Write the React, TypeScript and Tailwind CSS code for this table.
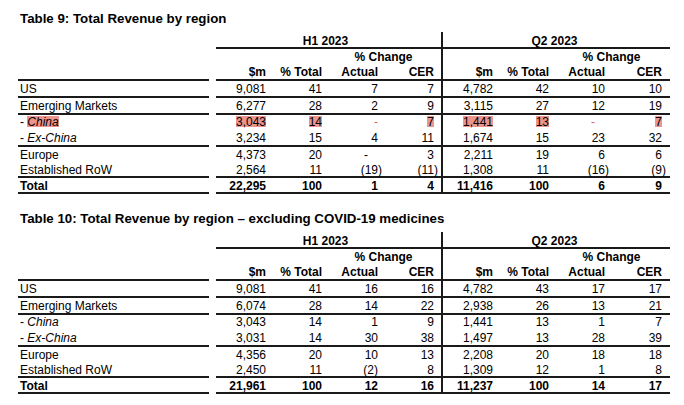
import clsx from "clsx";

type Row = {
  label: string;
  sub?: boolean;
  hlLabel?: boolean;
  vals: string[];
  cls: string;
  line?: boolean;
  bold?: boolean;
};

// flags inside a value: ! highlight, ~ shifted dash, ^ hanging parenthesis
const table9: Row[] = [
  { label: "US", vals: ["9,081", "41", "7", "7", "4,782", "42", "10", "10"], cls: "h-[17px] leading-[16px]", line: true },
  { label: "Emerging Markets", vals: ["6,277", "28", "2", "9", "3,115", "27", "12", "19"], cls: "h-[17px] leading-[16px]", line: true },
  { label: "China", sub: true, hlLabel: true, vals: ["!3,043", "!14", "!-", "!7", "!1,441", "!13", "!~-", "!7"], cls: "h-[16px] leading-[15px]" },
  { label: "Ex-China", sub: true, vals: ["3,234", "15", "4", "11", "1,674", "15", "23", "32"], cls: "h-[16px] leading-[15px]", line: true },
  { label: "Europe", vals: ["4,373", "20", "~-", "3", "2,211", "19", "6", "6"], cls: "h-[15px] leading-[16px]" },
  { label: "Established RoW", vals: ["2,564", "11", "^(19)", "^(11)", "1,308", "11", "^(16)", "^(9)"], cls: "h-[16px] leading-[17px]", line: true },
  { label: "Total", bold: true, vals: ["22,295", "100", "1", "4", "11,416", "100", "6", "9"], cls: "h-[16px] leading-[17px]", line: true },
];

const table10: Row[] = [
  { label: "US", vals: ["9,081", "41", "16", "16", "4,782", "43", "17", "17"], cls: "h-[17px] leading-[16px]", line: true },
  { label: "Emerging Markets", vals: ["6,074", "28", "14", "22", "2,938", "26", "13", "21"], cls: "h-[17px] leading-[16px]", line: true },
  { label: "China", sub: true, vals: ["3,043", "14", "1", "9", "1,441", "13", "1", "7"], cls: "h-[16px] leading-[15px]" },
  { label: "Ex-China", sub: true, vals: ["3,031", "14", "30", "38", "1,497", "13", "28", "39"], cls: "h-[16px] leading-[15px]", line: true },
  { label: "Europe", vals: ["4,356", "20", "10", "13", "2,208", "20", "18", "18"], cls: "h-[15px] leading-[16px]" },
  { label: "Established RoW", vals: ["2,450", "11", "(2)", "8", "1,309", "12", "1", "8"], cls: "h-[16px] leading-[17px]", line: true },
  { label: "Total", bold: true, vals: ["21,961", "100", "12", "16", "11,237", "100", "14", "17"], cls: "h-[16px] leading-[17px]", line: true },
];

const h1Cols = ["w-[54px] pr-[4px]", "w-[56px] pr-[4px]", "w-[56px] pr-[4px]", "w-[59px] pr-[7px]"];
const q2Cols = ["w-[54px] pr-[4px]", "w-[56px] pr-[4px]", "w-[56px] pr-[4px]", "w-[61px] pr-[8px]"];

function Val({ v }: { v: string }) {
  const hl = v.includes("!");
  const shift = v.includes("~");
  const hang = v.includes("^");
  const t = v.replace(/[!~^]/g, "");
  return (
    <span
      className={clsx(
        shift && "mr-[10px]",
        hang && "-mr-[4px]",
        hl && t !== "-" && "inline-block h-[11px] leading-[12px] bg-[#ec958d]",
        hl && t === "-" && "text-[#d8655c]"
      )}
    >
      {t}
    </span>
  );
}

function Group({ cols, vals, first, line }: { cols: string[]; vals: string[]; first?: boolean; line?: boolean }) {
  return (
    <div
      className={clsx(
        "flex border-[#1a1a1a]",
        first ? "w-[227px] border-r-2" : "w-[227px]",
        line && "border-b-2"
      )}
    >
      {cols.map((c, i) => (
        <div key={i} className={clsx(c, "text-right whitespace-nowrap")}>
          <Val v={vals[i]} />
        </div>
      ))}
    </div>
  );
}

function RevenueTable({ title, rows }: { title: string; rows: Row[] }) {
  return (
    <section>
      <h2 className="h-[16px] pl-[2px] text-[13.3px] font-bold leading-[16px]">{title}</h2>
      <div className="mt-[5px]">
        <div className="flex h-[17px] font-bold leading-[18px]">
          <div className="w-[198px]" />
          <div className="w-[227px] border-r-2 border-b-2 border-[#1a1a1a] pr-[6px] text-center">H1 2023</div>
          <div className="w-[227px] border-b-2 border-[#1a1a1a] pr-[4px] text-center">Q2 2023</div>
        </div>
        <div className="flex h-[15px] font-bold leading-[16px]">
          <div className="w-[198px]" />
          <div className="flex w-[227px] border-r-2 border-[#1a1a1a]">
            <div className="w-[110px]" />
            <div className="w-[115px] text-center">% Change</div>
          </div>
          <div className="flex w-[227px]">
            <div className="w-[110px]" />
            <div className="w-[117px] text-center">% Change</div>
          </div>
        </div>
        <div className="flex h-[17px] font-bold leading-[16px]">
          <div className="w-[191px] border-b-2 border-[#1a1a1a]" />
          <div className="w-[7px]" />
          <Group cols={h1Cols} vals={["$m", "% Total", "Actual", "CER"]} first line />
          <Group cols={q2Cols} vals={["$m", "% Total", "Actual", "CER"]} line />
        </div>
        {rows.map((r) => (
          <div key={r.label} className={clsx("flex", r.cls, r.bold && "font-bold")}>
            <div className={clsx("w-[191px] pl-[2px] whitespace-nowrap border-[#1a1a1a]", r.line && "border-b-2")}>
              {r.sub ? (
                <>
                  -{" "}
                  <span
                    className={clsx(
                      "italic",
                      r.hlLabel && "inline-block h-[11px] leading-[12px] bg-[#ec958d]"
                    )}
                  >
                    {r.label}
                  </span>
                </>
              ) : (
                r.label
              )}
            </div>
            <div className="w-[7px]" />
            <Group cols={h1Cols} vals={r.vals.slice(0, 4)} first line={r.line} />
            <Group cols={q2Cols} vals={r.vals.slice(4)} line={r.line} />
          </div>
        ))}
      </div>
    </section>
  );
}

export default function App() {
  return (
    <div className="h-[405px] w-[684px] overflow-hidden bg-white pl-[18px] pt-[11px] font-['Liberation_Sans',Arial,sans-serif] text-[12px] text-black">
      <RevenueTable title="Table 9: Total Revenue by region" rows={table9} />
      <div className="mt-[17px]">
        <RevenueTable title="Table 10: Total Revenue by region – excluding COVID-19 medicines" rows={table10} />
      </div>
    </div>
  );
}
